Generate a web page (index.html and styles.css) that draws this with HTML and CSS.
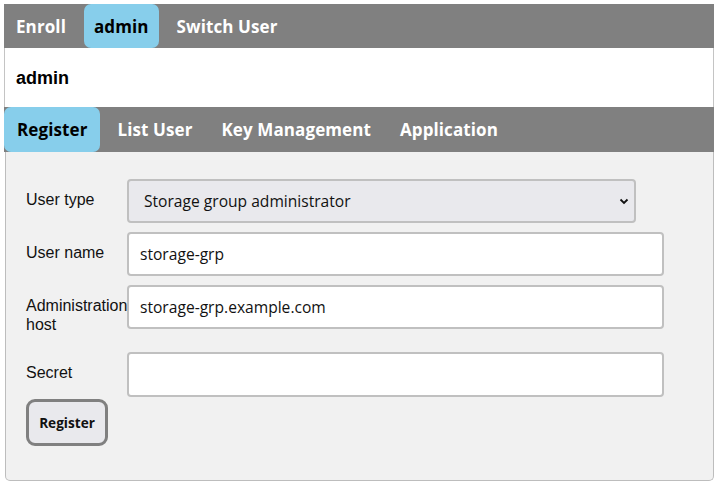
FILE: index.html
```html
<!DOCTYPE html>
<html>
<head>
<meta charset="utf-8">
<link rel="stylesheet" href="styles.css">
</head>
<body>
<nav class="bar top-bar">
  <a class="tab">Enroll</a>
  <a class="tab active">admin</a>
  <a class="tab">Switch User</a>
</nav>
<header class="user-header">admin</header>
<nav class="bar sub-bar">
  <a class="tab active">Register</a>
  <a class="tab">List User</a>
  <a class="tab">Key Management</a>
  <a class="tab">Application</a>
</nav>
<main class="panel">
  <div class="row">
    <label class="lbl">User type</label>
    <div class="select-wrap">
      <select class="select">
        <option>Storage group administrator</option>
      </select>
      <svg class="chev" width="10" height="7" viewBox="0 0 10 7"><path d="M1.5 1.5 L5 5 L8.5 1.5" fill="none" stroke="#111" stroke-width="1.8"/></svg>
    </div>
  </div>
  <div class="row">
    <label class="lbl">User name</label>
    <input class="field" type="text" value="storage-grp">
  </div>
  <div class="row">
    <label class="lbl">Administration host</label>
    <input class="field" type="text" value="storage-grp.example.com">
  </div>
  <div class="row last">
    <label class="lbl">Secret</label>
    <input class="field tall" type="password" value="">
  </div>
  <button class="btn">Register</button>
</main>
</body>
</html>
```

FILE: styles.css
```css
html, body {
  margin: 0;
  padding: 0;
  background: #ffffff;
}
body {
  padding: 4px;
  width: 710px;
  font-family: "Liberation Sans", Arial, sans-serif;
}
.bar {
  display: flex;
  gap: 5px;
  background: #808080;
}
.top-bar {
  height: 44px;
  gap: 6px;
}
.sub-bar {
  height: 45px;
}
.tab {
  display: flex;
  align-items: center;
  padding: 0 12px;
  font-family: "Open Sans", "Noto Sans", sans-serif;
  font-weight: 700;
  font-size: 17px;
  letter-spacing: 0.1px;
  color: #ffffff;
  border-radius: 7px;
}
.tab.active {
  background: #87ceeb;
  color: #000000;
}
.top-bar .tab.active {
  padding: 0 10px;
}
.sub-bar .tab.active {
  padding: 0 13px;
}
.user-header {
  height: 59px;
  box-sizing: border-box;
  display: flex;
  align-items: center;
  padding: 2px 0 0 11px;
  border-left: 1px solid #c4c4c4;
  border-right: 1px solid #c4c4c4;
  font-weight: 700;
  font-size: 18px;
  color: #000;
}
.panel {
  margin-left: 1px;
  background: #f1f1f1;
  border: 1px solid #bdbdbd;
  border-top: none;
  border-radius: 0 0 5px 5px;
  height: 329px;
  box-sizing: border-box;
  padding: 27px 0 0 20px;
}
.row {
  display: flex;
  align-items: flex-start;
  margin-bottom: 9px;
}
.row.last {
  margin-bottom: 2px;
}
.lbl {
  width: 101px;
  flex: none;
  padding: 11px 0 9px;
  font-size: 16px;
  line-height: 19px;
  color: #111;
}
.select-wrap {
  position: relative;
  width: 509px;
}
.select {
  appearance: none;
  -webkit-appearance: none;
  width: 100%;
  height: 44px;
  box-sizing: border-box;
  border: 2px solid #c0c0c0;
  border-radius: 4px;
  background: #e9e9ed;
  padding: 0 0 0 15px;
  font-family: "Open Sans", "Noto Sans", sans-serif;
  font-size: 15.6px;
  color: #111;
}
.chev {
  position: absolute;
  right: 7px;
  top: 19px;
}
.field {
  width: 537px;
  height: 44px;
  box-sizing: border-box;
  border: 2px solid #c0c0c0;
  border-radius: 4px;
  background: #ffffff;
  padding: 0 11px;
  font-family: "Open Sans", "Noto Sans", sans-serif;
  font-size: 15.6px;
  color: #111;
}
.field.tall {
  height: 45px;
}
.btn {
  display: block;
  width: 82px;
  height: 47px;
  border: 3px solid #808080;
  border-radius: 9px;
  background: #e9e9ed;
  font-family: "Open Sans", "Noto Sans", sans-serif;
  font-weight: 700;
  font-size: 13.6px;
  color: #111;
  padding: 0;
}
```
